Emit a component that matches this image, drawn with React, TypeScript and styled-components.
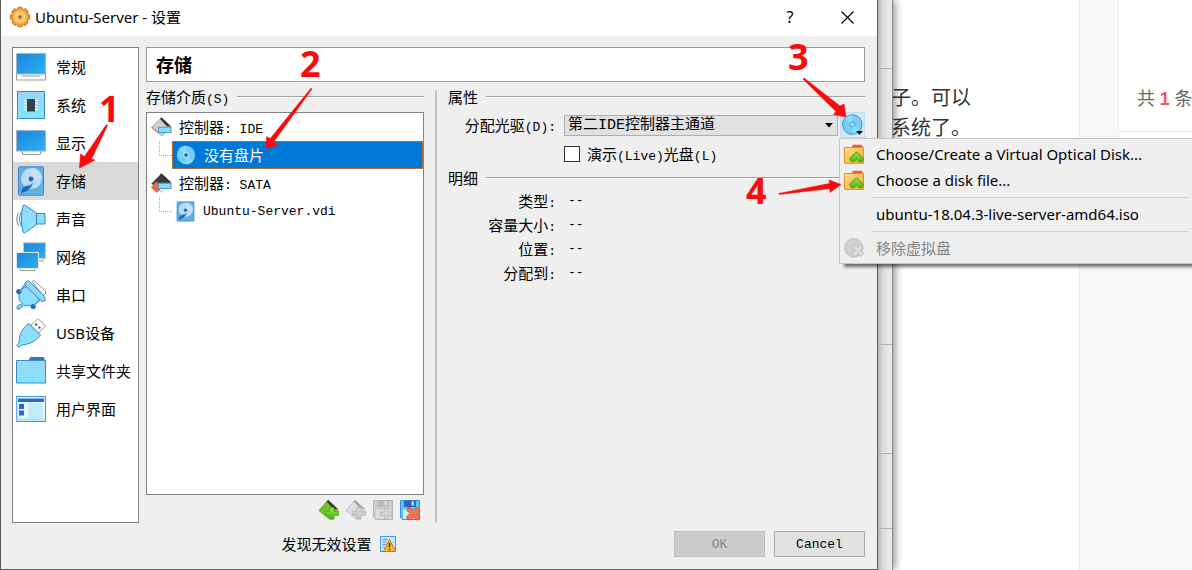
import React from "react";
import styled, { createGlobalStyle, css } from "styled-components";

const ui = `"Noto Sans", "Noto Sans CJK SC", sans-serif`;
const song = `"Noto Sans CJK SC", sans-serif`;
const mono = `"Liberation Mono", "Noto Sans CJK SC", monospace`;

const GlobalStyle = createGlobalStyle`
  *, *::before, *::after { box-sizing: border-box; }
  body { margin: 0; font-family: ${song}; font-size: 15px; line-height: 20px; color: #000; background: #f7f7f7; }
  ul, dl, dd, h1, h2, p { margin: 0; padding: 0; }
  ul { list-style: none; }
  button, input, select { font: inherit; color: inherit; margin: 0; }
  svg { display: block; flex: none; }
`;

/* ---------- desktop and windows behind ---------- */

const Desktop = styled.div`
  position: relative;
  display: flex;
  min-height: 100vh;
  overflow: hidden;
`;

const ManagerEdge = styled.div`
  display: flex;
  flex-direction: column;
  flex: none;
  width: 15px;
  z-index: 1;
  border-right: 1px solid #8a8a8a;
  background: linear-gradient(to right, #b9b9b9, #d9d9d9 5px, #e9e9e9 12px);
  box-shadow: 2px 0 9px rgba(0, 0, 0, 0.45);
`;

const EdgeSegment = styled.div<{ $h?: number }>`
  flex: ${(p) => (p.$h ? "none" : "1")};
  height: ${(p) => (p.$h ? `${p.$h}px` : "auto")};
  border-bottom: ${(p) => (p.$h ? "1px solid #b0b0b0" : "none")};
`;

const WebPage = styled.div`
  display: flex;
  flex: none;
  width: 299px;
  font-family: ${ui};
  background: #f7f7f7;
`;

const Article = styled.div`
  flex: none;
  width: 187px;
  padding-top: 83px;
  background: #fff;
  border-right: 1px solid #eee;
  font-size: 20px;
  line-height: 30px;
  color: #333;
`;

const ArticleLine = styled.p`
  margin-left: -2px;
`;

const Aside = styled.aside`
  flex: 1;
  min-width: 0;
  padding-left: 38px;
`;

const CountCard = styled.div`
  height: 180px;
  background: #fff;
  border-left: 1px solid #eee;
`;

const CountLine = styled.p`
  height: 132px;
  padding: 84px 0 0 18px;
  border-bottom: 1px solid #e6e6e6;
  font-size: 18px;
  line-height: 28px;
  color: #666;
  white-space: nowrap;
`;

const CountNumber = styled.b`
  font-family: "Liberation Sans", sans-serif;
  color: #f05a60;
`;

/* ---------- settings dialog ---------- */

const Dialog = styled.section`
  display: flex;
  flex-direction: column;
  flex: 1;
  min-width: 800px;
  z-index: 2;
  background: #efefef;
  border: solid #5c5c5c;
  border-width: 0 1px 1px;
`;

const TitleBar = styled.header`
  display: flex;
  align-items: center;
  height: 36px;
  padding: 0 8px 2px;
  background: #fff;
  font-family: ${ui};
`;

const Title = styled.h1`
  flex: 1;
  margin-left: 4px;
  font-size: 15px;
  font-weight: 400;
`;

const TitleButton = styled.button`
  display: grid;
  place-items: center;
  width: 44px;
  height: 32px;
  margin-left: 13px;
  padding: 0;
  border: 0;
  background: none;
  font-size: 16px;
`;

const Body = styled.div`
  display: flex;
  flex: 1;
  gap: 7px;
  padding: 11px 12px 0 11px;
`;

const Nav = styled.nav`
  position: relative;
  width: 127px;
  background: #fff;
  border: 1px solid #828282;
`;

const NavButton = styled.button<{ $active: boolean }>`
  display: flex;
  align-items: center;
  gap: 10px;
  width: 100%;
  height: 38px;
  padding: 0 0 0 3px;
  border: 0;
  background: ${(p) => (p.$active ? "#d9d9d9" : "none")};
  font-family: ${ui};
  text-align: left;
  white-space: nowrap;
`;

const Content = styled.div`
  display: flex;
  flex-direction: column;
  flex: 1;
  min-width: 0;
`;

const PageHeading = styled.h2`
  height: 35px;
  padding-left: 9px;
  border: 1px solid #9a9a9a;
  background: #fff;
  font-size: 18px;
  line-height: 32px;
  font-weight: 700;
`;

const Columns = styled.div`
  display: flex;
  flex: 1;
  gap: 11px;
`;

const MediaPanel = styled.div`
  position: relative;
  display: flex;
  flex-direction: column;
  width: 278px;
`;

const Splitter = styled.div`
  width: 2px;
  margin-top: 8px;
  background: #c4c4c4;
`;

const Attributes = styled.div`
  flex: 1;
`;

const GroupTitle = styled.div<{ $compact?: boolean }>`
  display: flex;
  align-items: center;
  gap: 8px;
  height: ${(p) => (p.$compact ? 19 : 30)}px;
  white-space: nowrap;
  &::after {
    content: "";
    flex: 1;
    height: 2px;
    border-top: 1px solid #a0a0a0;
    border-bottom: 1px solid #fff;
  }
`;

const Latin = styled.span`
  font-family: ${mono};
  font-size: 13px;
  line-height: 1;
`;

const Tree = styled.ul`
  flex: 1;
  background: #fff;
  border: 1px solid #828282;
`;

const ControllerRow = styled.li`
  display: flex;
  align-items: center;
  gap: 7px;
  height: 28px;
  padding-left: 4px;
`;

const MediumRow = styled.li`
  display: flex;
  height: 28px;
  &::before {
    content: "";
    width: 13px;
    height: 15px;
    margin-left: 12px;
    border: dotted #a8a8a8;
    border-width: 0 0 1px 1px;
  }
`;

const Medium = styled.div<{ $selected?: boolean }>`
  display: flex;
  align-items: center;
  flex: 1;
  gap: 8px;
  padding-left: 4px;
  ${(p) =>
    p.$selected &&
    css`
      background: #0078d7;
      color: #fff;
      outline: 1px dotted #c98a4a;
      outline-offset: -1px;
    `}
`;

const ToolRow = styled.div`
  display: flex;
  justify-content: flex-end;
  align-items: center;
  gap: 5px;
  height: 28px;
  padding: 1px 3px 0 0;
`;

const ToolButton = styled.button`
  width: 22px;
  height: 22px;
  padding: 0;
  border: 0;
  background: none;
`;

const Field = styled.div`
  display: grid;
  grid-template-columns: 116px 1fr auto;
  align-items: center;
  height: 26px;
`;

const FieldLabel = styled.label`
  padding-right: 8px;
  text-align: right;
  white-space: nowrap;
`;

const SelectBox = styled.div`
  display: grid;
  align-items: center;
  margin-right: 2px;
  & > * { grid-area: 1 / 1; }
  & > svg { justify-self: end; margin-right: 5px; pointer-events: none; }
`;

const Select = styled.select`
  appearance: none;
  width: 100%;
  height: 21px;
  padding: 0 20px 0 3px;
  border: 1px solid #adadad;
  border-radius: 0;
  background: #e1e1e1;
  font-family: ${mono};
  line-height: 19px;
`;

const DiscHolder = styled.div`
  position: relative;
`;

const DiscButton = styled.button`
  display: block;
  width: 25px;
  height: 26px;
  padding: 0;
  border: 1px solid #c0dcf3;
  background: #d5e8f7;
`;

const CheckRow = styled.div`
  display: flex;
  align-items: center;
  gap: 7px;
  height: 30px;
  padding: 2px 0 0 116px;
`;

const CheckBox = styled.input`
  appearance: none;
  width: 16px;
  height: 16px;
  border: 1px solid #333;
  background: #fff;
`;

const Details = styled.dl`
  display: grid;
  grid-template-columns: 108px 1fr;
  grid-auto-rows: 24px;
  align-items: center;
  column-gap: 12px;
  padding-top: 2px;
`;

const DetailName = styled.dt`
  text-align: right;
`;

const DetailValue = styled.dd`
  font-family: ${mono};
  font-size: 13px;
`;

const Footer = styled.footer`
  display: flex;
  align-items: center;
  gap: 9px;
  height: 46px;
  padding: 0 12px 4px 11px;
`;

const Notice = styled.div`
  display: flex;
  flex: 1;
  align-items: center;
  justify-content: center;
  gap: 8px;
`;

const DialogButton = styled.button`
  width: 91px;
  height: 26px;
  padding: 2px 0 0;
  border: 1px solid #adadad;
  background: #e1e1e1;
  font-family: ${mono};
  font-size: 13px;
  &:disabled {
    border-color: #bfbfbf;
    background: #cccccc;
    color: #838383;
  }
`;

/* ---------- drop-down menu ---------- */

const Menu = styled.div`
  position: absolute;
  top: 26px;
  left: -1px;
  width: 354px;
  padding: 2px 3px;
  border: 1px solid #c8c8c8;
  background: #efefef;
  box-shadow: 4px 4px 3px -1px rgba(0, 0, 0, 0.55);
  font-family: ${ui};
`;

const MenuItem = styled.button`
  display: grid;
  grid-template-columns: 20px 1fr;
  column-gap: 12px;
  align-items: center;
  width: 100%;
  height: 26px;
  padding: 0 0 0 1px;
  border: 0;
  background: none;
  text-align: left;
  white-space: nowrap;
  &:disabled { color: #838383; }
  & > span { grid-column: 2; }
`;

const MenuSeparator = styled.hr`
  height: 8px;
  margin: 0 0 0 29px;
  border: 0;
  background: linear-gradient(#cfcfcf, #cfcfcf) 0 4px / 100% 1px no-repeat;
`;

/* ---------- red callouts ---------- */

const Callout = styled.div<{ $x: number; $y: number }>`
  position: absolute;
  left: ${(p) => p.$x}px;
  top: ${(p) => p.$y}px;
  z-index: 5;
  color: #fa0a0a;
  pointer-events: none;
`;

const CalloutNumber = styled(Callout)`
  font-family: "Open Sans", sans-serif;
  font-size: 36px;
  line-height: 36px;
  font-weight: 700;
`;

const Arrow = ({ x, y, w, h, points }: { x: number; y: number; w: number; h: number; points: string }) => (
  <Callout $x={x} $y={y}>
    <svg width={w} height={h} viewBox={`0 0 ${w} ${h}`}>
      <polygon points={points} fill="currentColor" stroke="currentColor" strokeWidth="0.6" strokeLinejoin="round" />
    </svg>
  </Callout>
);

/* ---------- icons ---------- */

const GradientDefs = styled.svg`
  position: absolute;
  width: 0;
  height: 0;
`;

const Gradients = () => (
  <GradientDefs aria-hidden="true">
    <defs>
      <linearGradient id="screen" x1="0" y1="0" x2="1" y2="1">
        <stop offset="0" stopColor="#1a86dc" />
        <stop offset="1" stopColor="#2cb0f4" />
      </linearGradient>
      <linearGradient id="aqua" x1="0" y1="0" x2="0" y2="1">
        <stop offset="0" stopColor="#9ad6f7" />
        <stop offset="1" stopColor="#7fe6fc" />
      </linearGradient>
      <linearGradient id="orange" x1="0" y1="0" x2="1" y2="1">
        <stop offset="0" stopColor="#ffdf8a" />
        <stop offset="1" stopColor="#f4a92c" />
      </linearGradient>
      <linearGradient id="green" x1="0" y1="0" x2="0" y2="1">
        <stop offset="0" stopColor="#9ae04a" />
        <stop offset="1" stopColor="#4cba14" />
      </linearGradient>
      <linearGradient id="silver" x1="0" y1="0" x2="0" y2="1">
        <stop offset="0" stopColor="#d8d8d8" />
        <stop offset="1" stopColor="#c2c2c2" />
      </linearGradient>
    </defs>
  </GradientDefs>
);

const Icon30 = ({ children }: { children: React.ReactNode }) => (
  <svg width="30" height="30" viewBox="0 0 30 30" aria-hidden="true">{children}</svg>
);

const line = "#3d88c4";

const GeneralIcon = () => (
  <Icon30>
    <path d="M.5 21.5h29v6.500h-29z" fill="#fdfdfd" stroke="#9a9a9a" />
    <path d="M5 22.500l1.500 1.500h17l1.500-1.500" fill="none" stroke="#9a9a9a" />
    <rect x=".5" y="1.500" width="29" height="20.500" fill="url(#screen)" stroke="#9fb4c6" />
  </Icon30>
);

const SystemIcon = () => (
  <Icon30>
    <rect x="1.500" y="1.500" width="27" height="27" fill="url(#aqua)" stroke={line} />
    <path d="M8 10.500h14M8 13.500h14M8 16.500h14M8 19.500h14" stroke="#e8f7fd" strokeWidth="1.400" />
    <rect x="11" y="9" width="8" height="12.500" fill="#3a4046" />
  </Icon30>
);

const DisplayIcon = () => (
  <Icon30>
    <path d="M5.500 22.500l1 2.500v1.500h18V25l1-2.500" fill="#fff" stroke="#9a9a9a" />
    <rect x=".5" y="2.500" width="29" height="20.500" fill="url(#screen)" stroke="#9fb4c6" />
  </Icon30>
);

const DiskShape = () => (
  <>
    <rect x="2.500" y=".8" width="25" height="28.400" rx="1" fill="#62aee6" stroke="#3d88c4" />
    <circle cx="15.500" cy="12.500" r="10.500" fill="#b9dcf5" />
    <path d="M15.500 2A10.500 10.500 0 0 1 26 12.500L15.500 12.500z" fill="#c6e3f8" />
    <circle cx="15" cy="13" r="2.400" fill="#1c66bd" />
    <path d="M17 16.500c-1 5-6 9.800-12 10.500 0-5 3.500-7.500 9-7.500z" fill="#1f68c2" />
  </>
);

const StorageIcon = () => <Icon30><DiskShape /></Icon30>;

const AudioIcon = () => (
  <Icon30>
    <path d="M5.500 7.500c-2.500 5-2.500 10 0 15M2.500 9c-2.200 4-2.200 8.500 0 12.500" fill="none" stroke={line} />
    <path d="M20 9.500h9v10.500h-9z" fill="url(#aqua)" stroke={line} />
    <path d="M7 1.500Q8 .3 9.500 1.500L20.500 9v11.500L9.500 28.500Q7.500 30 7 28Q3.800 15 7 1.500z" fill="url(#aqua)" stroke={line} />
  </Icon30>
);

const NetworkIcon = () => (
  <Icon30>
    <rect x="22" y="15" width="5" height="4" fill="#fff" stroke="#9a9a9a" />
    <rect x="7.500" y=".8" width="22" height="15.700" fill="url(#screen)" stroke="#c3c3c3" />
    <path d="M4.500 26.500v2h14v-2" fill="#fff" stroke="#9a9a9a" />
    <rect x=".5" y="10.500" width="22" height="16" fill="url(#screen)" stroke="#e3e8ec" />
  </Icon30>
);

const SerialIcon = () => (
  <Icon30>
    <path d="M16 1.500l2-1L29.500 11v3L27 15.500z" fill="#fff" stroke="#999" />
    <path d="M8.500 4.500L3 12v8l5 5.500 9 .5 7.500-6z" fill="url(#aqua)" stroke={line} />
    <path d="M4 24L1.500 26l-.7 2.500 1 .8 2.700-1L7 26z" fill="#8fd0f5" stroke={line} />
    <path d="M9 2.500L12.500.5 28.500 16.500 29.300 20.500 26 21.500 9.500 6z" fill="#8fd8fa" stroke={line} />
    <circle cx="2.800" cy="11.500" r="2.600" fill="#2468c0" />
    <circle cx="17.200" cy="26.500" r="2.600" fill="#2468c0" />
    <path d="M10 6L3.500 11M24 19l-6 6.500" stroke="#5d9fd8" strokeWidth="1.600" />
  </Icon30>
);

const UsbIcon = () => (
  <Icon30>
    <path d="M14.500 7.500L22 .6 29.400 8 22.500 15z" fill="#fff" stroke="#999" />
    <circle cx="20.200" cy="6.500" r="1.200" fill="#555" />
    <circle cx="23.400" cy="9.600" r="1.200" fill="#555" />
    <path d="M13 5.500l11.500 11.500C21 22 14 26.500 5.500 27L3 29.200 .8 27.500 3 24.500C3 16 7 9 13 5.500z" fill="url(#aqua)" stroke={line} />
  </Icon30>
);

const FolderIcon = () => (
  <Icon30>
    <path d="M12 5l2.500-4h13L29.500 5z" fill="#2f76c8" />
    <path d="M.5 4.500h29v22.500h-29z" fill="url(#aqua)" stroke={line} />
  </Icon30>
);

const InterfaceIcon = () => (
  <Icon30>
    <rect x=".7" y="2.500" width="28.800" height="25" fill="#e2f5fe" stroke="#3d9ae0" />
    <rect x="2" y="4.500" width="26" height="3.500" fill="#2a6ac0" />
    <rect x="3" y="10" width="5" height="5" fill="#2a6ac0" />
    <rect x="3" y="16.500" width="5" height="5" fill="#2a6ac0" />
    <rect x="12.500" y="9" width="14" height="15.500" fill="#c3ebfb" />
    <path d="M2 25.500h26" stroke="#a3e2fa" strokeWidth="2" />
  </Icon30>
);

const GearIcon = () => (
  <svg width="22" height="22" viewBox="0 0 22 22" aria-hidden="true">
    {[0, 45, 90, 135].map((a) => (
      <rect key={a} x="8.200" y="1.200" width="5.600" height="19.600" rx="2" fill="#f0952a" stroke="#d0681c" strokeWidth=".9" transform={`rotate(${a} 11 11)`} />
    ))}
    <circle cx="11" cy="11" r="7.500" fill="#f8b04a" />
    <circle cx="11" cy="11" r="5" fill="#fbc56a" stroke="#ffd98e" strokeWidth="1.200" />
    <circle cx="11" cy="11" r="1.700" fill="#b4561c" />
  </svg>
);

const ControllerIcon = ({ sata }: { sata?: boolean }) => (
  <svg width="21" height="20" viewBox="0 0 21 20" aria-hidden="true">
    <path d="M10.500 .5L20 9.500 11 19.200 .5 10.500z" fill={sata ? "#3c3c3c" : "#d6cfcc"} stroke="#9a8f8c" strokeWidth=".7" />
    <path d="M10.500 .5L20 9.500h-4L9 2z" fill="#333" />
    {sata && <path d="M11 19.200L6 15l8-2 3 .5z" fill="#efe9e6" />}
    {sata && <path d="M5 8.500l5.500 5.500-4.500 5.500-5.500-5z" fill="#f0683c" stroke="#c4502c" strokeWidth=".7" />}
    {!sata && <path d="M1 10l4 3.800M4 12.800l3 3" stroke="#e08468" strokeWidth="1.400" />}
    <rect x="7.500" y="10.200" width="12.500" height="5.300" fill="#8adcfb" stroke="#4a9bd4" />
  </svg>
);

const Disc = () => (
  <svg width="20" height="20" viewBox="0 0 20 20" aria-hidden="true">
    <circle cx="10" cy="10" r="9.200" fill="#74cff7" />
    <path d="M10 10L3 4A9.200 9.200 0 0 1 10 .8zM10 10l7 6a9.200 9.200 0 0 1-7 3.200z" fill="#8adcfb" />
    <circle cx="10" cy="10" r="3" fill="#a4e4fc" />
    <circle cx="10" cy="10" r="1.800" fill="#1b62ac" />
  </svg>
);

const HardDisk = () => (
  <svg width="19" height="21" viewBox="1 0 28 30" aria-hidden="true"><DiskShape /></svg>
);

const DiscMenuIcon = () => (
  <svg width="23" height="24" viewBox="0 0 23 24" aria-hidden="true">
    <circle cx="11.300" cy="11.500" r="9.800" fill="#74cff7" stroke="#3c8fd0" />
    <path d="M11.300 11.500L4 5.800A9.300 9.300 0 0 1 11.300 2.200zM11.300 11.500l7 6a9.300 9.300 0 0 1-7 3.300z" fill="#8adcfb" />
    <circle cx="11.300" cy="11.500" r="2.300" fill="#b4e9fd" stroke="#4a92c4" />
    <path d="M15 18h7l-3.500 3.800z" fill="#000" />
  </svg>
);

const ChooseIcon = () => (
  <svg width="20" height="20" viewBox="0 0 20 20" aria-hidden="true">
    <path d="M7.500 3.500L9 .8h8.500L19.300 3.500z" fill="#e2622c" />
    <path d="M.5 3.500h19v15.800H.5z" fill="url(#orange)" stroke="#d9912a" />
    <path d="M12.500 7.800l7 7-2 2.900h-2.300l-2.700-2.400-2.700 2.400H7.500L5.500 14.800z" fill="url(#green)" stroke="#3a9a1c" />
  </svg>
);

const RemoveDiscIcon = () => (
  <svg width="20" height="20" viewBox="0 0 20 20" aria-hidden="true">
    <circle cx="9.800" cy="9.800" r="9.300" fill="#d0d0d0" stroke="#c0c0c0" />
    <path d="M9 8l2-1.500 2.800 2.800L16.500 6.500 19 9l-2.500 3L19.500 15 17 18.500l-3-2.500-3 2.500L8 16l3-3.500-2.500-3z" fill="#dcdcdc" stroke="#b8b8b8" strokeWidth=".8" />
  </svg>
);

const AddControllerIcon = ({ off }: { off?: boolean }) => (
  <svg width="22" height="22" viewBox="0 0 22 22" aria-hidden="true">
    <path d="M10 1L20 10.500 11 20 1 11.500z" fill={off ? "#dcdcdc" : "#6ec62c"} stroke={off ? "#bdbdbd" : "#4a9a1e"} strokeWidth=".8" />
    <path d="M10 1L19.500 9.500 15.500 10.500 9 3z" fill={off ? "#a9a9a9" : "#3a3a3a"} />
    <path d="M11.500 8.500h4.500v3.700h4.500v4H16v4h-4.500v-4H7.500v-4h4z" fill={off ? "url(#silver)" : "url(#green)"} stroke={off ? "#b5b5b5" : "#4aa01e"} strokeWidth=".8" />
  </svg>
);

const FloppyIcon = ({ remove }: { remove?: boolean }) => (
  <svg width="22" height="22" viewBox="0 0 22 22" aria-hidden="true">
    <path d="M1.500 1.500h19v19h-17l-2-2z" fill={remove ? "#5fc3f4" : "#cdcdcd"} stroke={remove ? "#3a8fd0" : "#b5b5b5"} />
    <rect x="5" y="1.500" width="12" height="6.500" fill={remove ? "#2a66c0" : "#bcbcbc"} />
    <rect x="12.500" y="2.500" width="2.500" height="4" fill={remove ? "#bfe4fa" : "#dedede"} />
    <rect x="4" y="10.500" width="14" height="9.500" fill={remove ? "#c9edfc" : "#dedede"} />
    {remove ? (
      <path d="M8.500 9l2.500-.5 3.300 3 3.300-3L20.500 9.500l.5 2-3 3 3 3.200-1.500 3-2 .3-2.800-2.800-3 2.800L8 20l-.3-2.500 3.300-3L8 11.500z" fill="#f4734a" stroke="#cf4f34" strokeWidth=".8" />
    ) : (
      <path d="M12.500 9.500h3.500v3.500h4v3.500h-4v3.500h-3.500v-3.500h-4v-3.500h4z" fill="#d4d4d4" stroke="#b8b8b8" strokeWidth=".8" />
    )}
  </svg>
);

const WarningIcon = () => (
  <svg width="16" height="16" viewBox="0 0 16 16" aria-hidden="true">
    <rect x=".5" y=".5" width="15" height="15" fill="#c4e8fb" stroke="#4a9bdc" />
    <path d="M2.500 3.500h5M2.500 6h4M2.500 8.500h3M2.500 11h2" stroke="#5a94c4" />
    <path d="M9.500 3.500L15.700 15.500H3.300z" fill="#f8b83c" stroke="#c07a1c" />
    <path d="M9.500 7v4.500M9.500 12.700v1.500" stroke="#4a2c08" strokeWidth="1.400" />
  </svg>
);

const CloseIcon = () => (
  <svg width="13" height="13" viewBox="0 0 13 13" aria-hidden="true">
    <path d="M.5 .5l12 12M12.500 .5l-12 12" stroke="#000" strokeWidth="1.100" />
  </svg>
);

/* ---------- the screen ---------- */

const sections: [string, React.FC][] = [
  ["常规", GeneralIcon],
  ["系统", SystemIcon],
  ["显示", DisplayIcon],
  ["存储", StorageIcon],
  ["声音", AudioIcon],
  ["网络", NetworkIcon],
  ["串口", SerialIcon],
  ["USB设备", UsbIcon],
  ["共享文件夹", FolderIcon],
  ["用户界面", InterfaceIcon],
];

const details = ["类型", "容量大小", "位置", "分配到"];

export default function App() {
  return (
    <Desktop>
      <GlobalStyle />
      <Gradients />
      <Dialog aria-label="Ubuntu-Server - 设置">
        <TitleBar>
          <GearIcon />
          <Title>Ubuntu-Server - 设置</Title>
          <TitleButton type="button">?</TitleButton>
          <TitleButton type="button" aria-label="关闭"><CloseIcon /></TitleButton>
        </TitleBar>

        <Body>
          <Nav>
            <ul>
              {sections.map(([name, Icon]) => (
                <li key={name}>
                  <NavButton type="button" $active={name === "存储"}>
                    <Icon />
                    {name}
                  </NavButton>
                </li>
              ))}
            </ul>
            <CalloutNumber $x={86} $y={43}>1</CalloutNumber>
            <Arrow x={64} y={75} w={32} h={48} points="29.500,1.500 30.500,2.500 14.500,36 18,37 2.500,45 3.500,31 7.500,33.500" />
          </Nav>

          <Content>
            <PageHeading>存储</PageHeading>
            <Columns>
              <MediaPanel>
                <GroupTitle><span>存储介质<Latin>(S)</Latin></span></GroupTitle>
                <Tree>
                  <ControllerRow>
                    <ControllerIcon />
                    <span>控制器<Latin>: IDE</Latin></span>
                  </ControllerRow>
                  <MediumRow>
                    <Medium $selected><Disc />没有盘片</Medium>
                  </MediumRow>
                  <ControllerRow>
                    <ControllerIcon sata />
                    <span>控制器<Latin>: SATA</Latin></span>
                  </ControllerRow>
                  <MediumRow>
                    <Medium><HardDisk /><Latin>Ubuntu-Server.vdi</Latin></Medium>
                  </MediumRow>
                </Tree>
                <ToolRow>
                  <ToolButton type="button" aria-label="添加控制器"><AddControllerIcon /></ToolButton>
                  <ToolButton type="button" aria-label="删除控制器" disabled><AddControllerIcon off /></ToolButton>
                  <ToolButton type="button" aria-label="添加虚拟介质" disabled><FloppyIcon /></ToolButton>
                  <ToolButton type="button" aria-label="删除虚拟介质"><FloppyIcon remove /></ToolButton>
                </ToolRow>
                <CalloutNumber $x={154} $y={-36}>2</CalloutNumber>
                <Arrow x={118} y={4} w={50} h={64} points="47,2.300 48,3 10,55.500 14,59 2,62.300 2.700,50.700 6.300,52.500" />
              </MediaPanel>

              <Splitter />

              <Attributes>
                <GroupTitle>属性</GroupTitle>
                <Field>
                  <FieldLabel htmlFor="drive">分配光驱<Latin>(D):</Latin></FieldLabel>
                  <SelectBox>
                    <Select id="drive"><option>第二IDE控制器主通道</option></Select>
                    <svg width="8" height="5" viewBox="0 0 8 5"><path d="M0 0h8L4 4.500z" /></svg>
                  </SelectBox>
                  <DiscHolder>
                    <DiscButton type="button" aria-label="选择虚拟光盘" aria-haspopup="menu"><DiscMenuIcon /></DiscButton>
                    <Menu role="menu">
                      <MenuItem type="button" role="menuitem"><ChooseIcon /><span>Choose/Create a Virtual Optical Disk...</span></MenuItem>
                      <MenuItem type="button" role="menuitem"><ChooseIcon /><span>Choose a disk file...</span></MenuItem>
                      <MenuSeparator />
                      <MenuItem type="button" role="menuitem"><span>ubuntu-18.04.3-live-server-amd64.iso</span></MenuItem>
                      <MenuSeparator />
                      <MenuItem type="button" role="menuitem" disabled><RemoveDiscIcon /><span>移除虚拟盘</span></MenuItem>
                    </Menu>
                    <CalloutNumber $x={-52} $y={-73}>3</CalloutNumber>
                    <Arrow x={-38} y={-36} w={48} h={44} points="1,3 2,2 38,30 42,28 44,41 31.500,38.500 34,35.500" />
                    <CalloutNumber $x={-94} $y={61}>4</CalloutNumber>
                    <Arrow x={-62} y={64} w={64} h={20} points="1,17.500 1,18.500 52,12.500 52,16.500 63,8.500 51,4 51.500,7.500" />
                  </DiscHolder>
                </Field>
                <CheckRow>
                  <CheckBox type="checkbox" id="live" />
                  <label htmlFor="live">演示<Latin>(Live)</Latin>光盘<Latin>(L)</Latin></label>
                </CheckRow>
                <GroupTitle $compact>明细</GroupTitle>
                <Details>
                  {details.map((name) => (
                    <React.Fragment key={name}>
                      <DetailName>{name}<Latin>:</Latin></DetailName>
                      <DetailValue>--</DetailValue>
                    </React.Fragment>
                  ))}
                </Details>
              </Attributes>
            </Columns>
          </Content>
        </Body>

        <Footer>
          <Notice>发现无效设置<WarningIcon /></Notice>
          <DialogButton type="button" disabled>OK</DialogButton>
          <DialogButton type="button">Cancel</DialogButton>
        </Footer>
      </Dialog>

      <ManagerEdge>
        <EdgeSegment $h={69} />
        <EdgeSegment $h={276} />
        <EdgeSegment $h={109} />
        <EdgeSegment $h={75} />
        <EdgeSegment />
      </ManagerEdge>

      <WebPage>
        <Article>
          <ArticleLine>子。可以</ArticleLine>
          <ArticleLine>系统了。</ArticleLine>
        </Article>
        <Aside>
          <CountCard>
            <CountLine>共 <CountNumber>1</CountNumber> 条</CountLine>
          </CountCard>
        </Aside>
      </WebPage>
    </Desktop>
  );
}
